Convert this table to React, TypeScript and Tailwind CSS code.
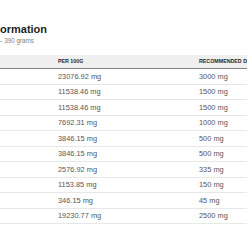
import React from "react";

const rows: [string, string][] = [
  ["23076.92 mg", "3000 mg"],
  ["11538.46 mg", "1500 mg"],
  ["11538.46 mg", "1500 mg"],
  ["7692.31 mg", "1000 mg"],
  ["3846.15 mg", "500 mg"],
  ["3846.15 mg", "500 mg"],
  ["2576.92 mg", "335 mg"],
  ["1153.85 mg", "150 mg"],
  ["346.15 mg", "45 mg"],
  ["19230.77 mg", "2500 mg"],
];

export default function App() {
  return (
    <div className="w-[247px] h-[247px] overflow-hidden bg-white font-['Liberation_Sans',Arial,sans-serif]">
      <div className="pt-[24px] text-[11px] leading-[11px] font-bold text-[#1f1f1f] whitespace-nowrap">
        ormation
      </div>
      <div className="mt-[1.5px] text-[6.3px] leading-[7px] text-[#808080] whitespace-nowrap -ml-[1px]">
        – 390 grams
      </div>
      <div className="mt-[11.5px] w-[260px]">
        <div className="grid grid-cols-[58px_141px_1fr] items-center h-[14px] bg-[#efefef] border-b-[1.5px] border-[#858585] text-[5.3px] font-bold text-[#2a2a2a] whitespace-nowrap">
          <div></div>
          <div>PER 100G</div>
          <div>RECOMMENDED Daily</div>
        </div>
        {rows.map(([a, b], i) => (
          <div
            key={i}
            className="grid grid-cols-[58px_141px_1fr] items-center h-[15.5px] border-b border-[#e8e8e8] text-[7.4px] text-[#555] whitespace-nowrap"
          >
            <div></div>
            <div>{a}</div>
            <div>{b}</div>
          </div>
        ))}
      </div>
    </div>
  );
}
